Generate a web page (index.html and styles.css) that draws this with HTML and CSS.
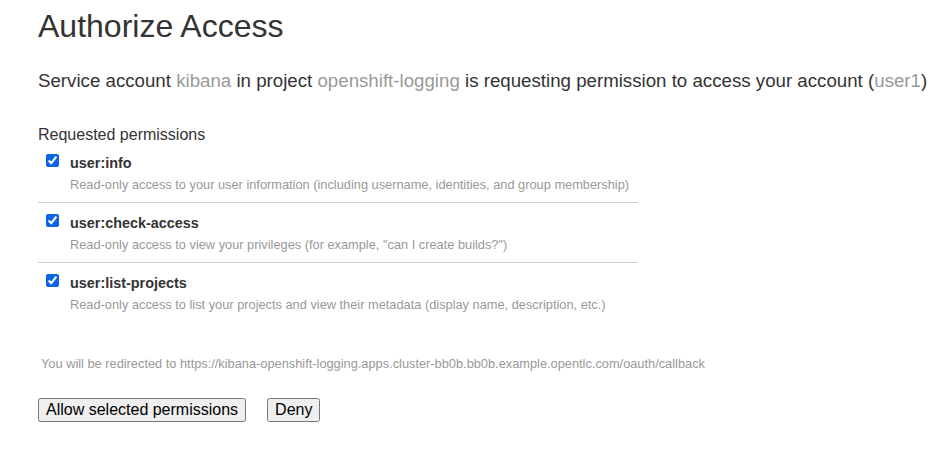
FILE: index.html
```html
<!DOCTYPE html>
<html>
<head>
<meta charset="utf-8">
<link rel="stylesheet" href="styles.css">
</head>
<body>
<div class="page">
  <h1 class="title">Authorize Access</h1>
  <p class="intro">Service account <span class="muted">kibana</span> in project <span class="muted">openshift-logging</span> is requesting permission to access your account (<span class="muted">user1</span>)</p>
  <form class="form">
    <h4 class="perm-heading">Requested permissions</h4>
    <div class="perms">
      <div class="perm">
        <input class="check" type="checkbox" checked>
        <div class="perm-body">
          <div class="perm-name">user:info</div>
          <div class="perm-desc">Read-only access to your user information (including username, identities, and group membership)</div>
        </div>
      </div>
      <div class="perm">
        <input class="check" type="checkbox" checked>
        <div class="perm-body">
          <div class="perm-name">user:check-access</div>
          <div class="perm-desc">Read-only access to view your privileges (for example, "can I create builds?")</div>
        </div>
      </div>
      <div class="perm last">
        <input class="check" type="checkbox" checked>
        <div class="perm-body">
          <div class="perm-name">user:list-projects</div>
          <div class="perm-desc">Read-only access to list your projects and view their metadata (display name, description, etc.)</div>
        </div>
      </div>
    </div>
    <p class="redirect">You will be redirected to https://kibana-openshift-logging.apps.cluster-bb0b.bb0b.example.opentlc.com/oauth/callback</p>
    <div class="actions">
      <button class="btn" type="button">Allow selected permissions</button>
      <button class="btn" type="button">Deny</button>
    </div>
  </form>
</div>
</body>
</html>
```
FILE: styles.css
```css
html, body {
  margin: 0;
  padding: 0;
  background: #fff;
}
body {
  font-family: "Liberation Sans", Arial, sans-serif;
  color: #333;
}
.page {
  padding: 6px 38px 0;
}
.title {
  font-size: 32px;
  font-weight: 400;
  margin: 0;
  line-height: 40px;
}
.intro {
  font-size: 18.7px;
  margin: 23px 0 0;
  line-height: 24px;
  white-space: nowrap;
}
.muted {
  color: #999;
}
.perm-heading {
  font-size: 16px;
  font-weight: 400;
  margin: 34px 0 0;
  line-height: 16px;
}
.perms {
  width: 600px;
}
.perm {
  display: flex;
  border-bottom: 1px solid #ccc;
  height: 59px;
  box-sizing: content-box;
}
.perm.last {
  border-bottom: none;
}
.check {
  margin: 11px 11px 0 8px;
  width: 13px;
  height: 13px;
  flex: none;
  accent-color: #0b63e5;
}
.perm-body {
  padding-top: 10px;
}
.perm-name {
  font-size: 14.4px;
  font-weight: 700;
  line-height: 20px;
}
.perm-desc {
  font-size: 12.8px;
  color: #999;
  margin-top: 3px;
  line-height: 18px;
}
.redirect {
  font-size: 12.8px;
  color: #999;
  margin: 33px 0 0 3px;
  line-height: 18px;
}
.actions {
  display: flex;
  gap: 21px;
  margin-top: 25px;
}
.btn {
  font-family: "Liberation Sans", Arial, sans-serif;
  font-size: 16px;
  padding: 1px 6px;
  color: #000;
}
```
